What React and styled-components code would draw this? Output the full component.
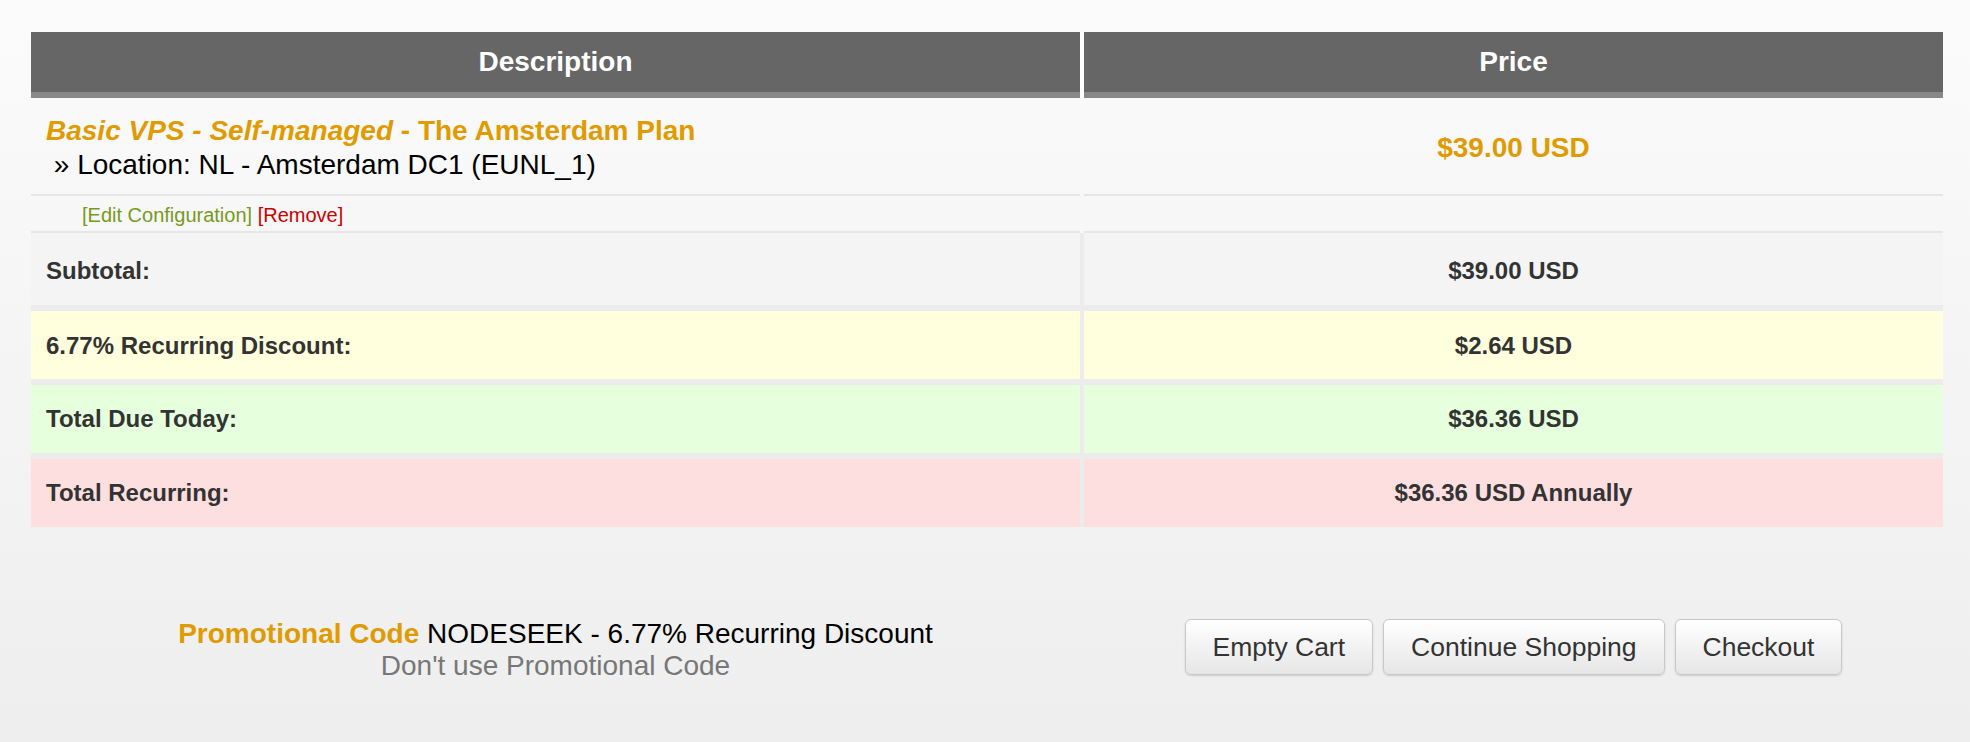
import React from "react";
import styled, { createGlobalStyle } from "styled-components";

const GlobalStyle = createGlobalStyle`
  html, body {
    margin: 0;
    padding: 0;
  }
  body {
    min-height: 742px;
    background: linear-gradient(to bottom, #fbfbfb 0%, #eeeeee 100%);
    font-family: "Liberation Sans", Arial, sans-serif;
    color: #333;
  }
`;

const Page = styled.div`
  padding: 32px 27px 0 31px;
  min-height: 742px;
  box-sizing: border-box;
`;

const Columns = styled.div`
  display: grid;
  grid-template-columns: 1049px 1fr;
  column-gap: 4px;
`;

const HeaderRow = styled(Columns)`
  background: #fff;
`;

const HeaderCell = styled.div`
  height: 60px;
  background: #666;
  border-bottom: 6px solid #888;
  color: #fff;
  font-size: 28px;
  font-weight: bold;
  display: flex;
  align-items: center;
  justify-content: center;
`;

const ItemCell = styled.div`
  border-bottom: 2px solid #e6e6e6;
  padding: ${(p) => p.$pad || "0 15px"};
  height: ${(p) => p.$h}px;
  box-sizing: border-box;
  display: flex;
  flex-direction: column;
  justify-content: center;
  align-items: ${(p) => (p.$center ? "center" : "flex-start")};
`;

const ItemTitle = styled.div`
  color: #df9b00;
  font-size: 28px;
  font-weight: bold;
  line-height: 34px;

  em {
    font-style: italic;
  }
`;

const ItemOption = styled.div`
  color: #000;
  font-size: 28px;
  line-height: 34px;
`;

const Price = styled.div`
  color: #df9b00;
  font-size: 28px;
  font-weight: bold;
`;

const Actions = styled.div`
  font-size: 20px;
  line-height: 24px;
`;

const ActionLink = styled.a`
  color: ${(p) => p.$color};
  text-decoration: none;
  cursor: pointer;
`;

const Summary = styled(Columns)`
  background: #ececec;
  row-gap: 6px;
`;

const SumCell = styled.div`
  height: ${(p) => p.$h || 68}px;
  box-sizing: border-box;
  background: ${(p) => p.$bg};
  display: flex;
  align-items: center;
  justify-content: ${(p) => (p.$center ? "center" : "flex-start")};
  padding: ${(p) => p.$top || 0}px 15px 0;
  font-size: 24px;
  font-weight: bold;
  color: #333;
`;

const Footer = styled(Columns)`
  margin-top: 91px;
  align-items: start;
`;

const Promo = styled.div`
  text-align: center;
  font-size: 28px;
  line-height: 32px;
  color: #000;
`;

const PromoLabel = styled.span`
  color: #df9b00;
  font-weight: bold;
`;

const PromoRemove = styled.div`
  color: #777;
`;

const Buttons = styled.div`
  display: flex;
  justify-content: center;
  gap: 10px;
  margin-top: 1px;
`;

const Button = styled.button`
  height: 56px;
  padding: 0 27px;
  font-family: "Liberation Sans", Arial, sans-serif;
  font-size: 26.5px;
  color: #333;
  background: linear-gradient(to bottom, #ffffff 0%, #e6e6e6 100%);
  border: 1px solid #c8c8c8;
  border-radius: 6px;
  box-shadow: 0 1px 2px rgba(0, 0, 0, 0.15);
  cursor: pointer;
`;

const rows = [
  { label: "Subtotal:", value: "$39.00 USD", bg: "#f4f4f4", h: 72, top: 4 },
  { label: "6.77% Recurring Discount:", value: "$2.64 USD", bg: "#ffffdd", top: 2 },
  { label: "Total Due Today:", value: "$36.36 USD", bg: "#e6ffdd" },
  { label: "Total Recurring:", value: "$36.36 USD Annually", bg: "#fddfe0" },
];

export default function App() {
  return (
    <>
      <GlobalStyle />
      <Page>
        <HeaderRow>
          <HeaderCell>Description</HeaderCell>
          <HeaderCell>Price</HeaderCell>
        </HeaderRow>

        <Columns>
          <ItemCell $h={98} $pad="4px 15px 0">
            <ItemTitle>
              <em>Basic VPS - Self-managed</em> - The Amsterdam Plan
            </ItemTitle>
            <ItemOption>{"\u00a0» Location: NL - Amsterdam DC1 (EUNL_1)"}</ItemOption>
          </ItemCell>
          <ItemCell $h={98} $pad="4px 15px 0" $center>
            <Price>$39.00 USD</Price>
          </ItemCell>
          <ItemCell $h={37} $pad="2px 15px 0 51px">
            <Actions>
              <ActionLink $color="#779a22">[Edit Configuration]</ActionLink>{" "}
              <ActionLink $color="#cc0000">[Remove]</ActionLink>
            </Actions>
          </ItemCell>
          <ItemCell $h={37} />
        </Columns>

        <Summary>
          {rows.map((r) => (
            <React.Fragment key={r.label}>
              <SumCell $bg={r.bg} $h={r.h} $top={r.top}>
                {r.label}
              </SumCell>
              <SumCell $bg={r.bg} $h={r.h} $top={r.top} $center>
                {r.value}
              </SumCell>
            </React.Fragment>
          ))}
        </Summary>

        <Footer>
          <Promo>
            <PromoLabel>Promotional Code</PromoLabel> NODESEEK - 6.77% Recurring Discount
            <PromoRemove>Don't use Promotional Code</PromoRemove>
          </Promo>
          <Buttons>
            <Button>Empty Cart</Button>
            <Button>Continue Shopping</Button>
            <Button>Checkout</Button>
          </Buttons>
        </Footer>
      </Page>
    </>
  );
}
